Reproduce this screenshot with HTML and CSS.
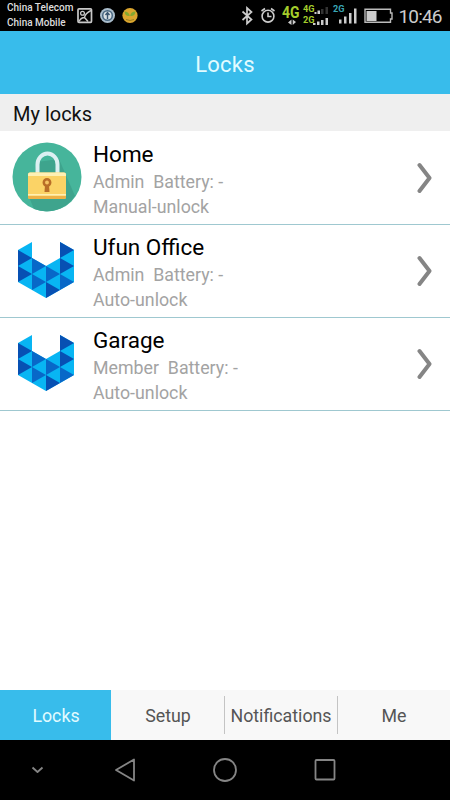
FILE: index.html
```html
<!DOCTYPE html>
<html lang="en">
<head>
<meta charset="utf-8">
<title>Locks</title>
<link rel="stylesheet" href="styles.css">
</head>
<body>
<svg class="defs" aria-hidden="true">
  <symbol id="gem" viewBox="0 0 56 58">
    <path fill="#08b5f3" d="M0 9 14 1V17L28 25 42 17V1L56 9V41L28 57 0 41Z"/>
    <path fill="#0750b3" d="M0 9 14 17 0 25ZM42 1 56 9 42 17ZM0 25 14 33 0 41ZM42 17 56 25 42 33Z"/>
    <path fill="#0868c8" d="M14 17 28 25 14 33ZM14 33 28 41 14 49ZM28 25 42 33 28 41ZM42 33 56 41 42 49Z"/>
    <path fill="#0750b3" d="M28 41 42 49 28 57Z"/>
  </symbol>
  <symbol id="chevron" viewBox="0 0 16 34">
    <path d="M2.500 4 12.500 17 2.500 30" fill="none" stroke="#858585" stroke-width="4" stroke-linecap="round" stroke-linejoin="round"/>
  </symbol>
</svg>
<div class="screen">
  <div class="status">
    <div class="carriers"><span>China Telecom</span><span>China Mobile</span></div>
    <svg class="status-icons" viewBox="76 0 374 31" width="374" height="31">
      <g fill="none" stroke="#c8c8c8" stroke-width="1.700">
        <rect x="78" y="8.800" width="13.500" height="13.500" rx="1"/>
        <circle cx="82.500" cy="13.300" r="1.900" stroke-width="1.300"/>
        <path d="M79 21.500Q81 17.500 84.500 17.500 85 13.500 91 10.500M84.500 17.500 88 21.500" stroke-width="1.400"/>
      </g>
      <circle cx="107.500" cy="15.500" r="7.500" fill="#a9bccb"/>
      <circle cx="107.500" cy="15.500" r="4.800" fill="#d8e0e5" stroke="#476680" stroke-width="1.500"/>
      <path d="M107.500 19V13M105.500 15 107.500 12.500 109.500 15" stroke="#385570" stroke-width="1.400" fill="none"/>
      <circle cx="130" cy="15.500" r="7.600" fill="#dca62e"/>
      <path d="M129.800 16Q125 16.500 124.500 11.500 129 11.500 129.800 16ZM130.200 16Q130.500 11.500 135.500 11.500 135 16.500 130.200 16Z" fill="#83a832"/>
      <path d="M126 19.500Q130 21.500 134 19.500" stroke="#9a8020" fill="none"/>
      <path d="M242.500 11.500 251.500 19.500 247 23.500V8L251.500 12 242.500 20" fill="none" stroke="#ccc" stroke-width="1.700"/>
      <g fill="none" stroke="#ccc" stroke-width="1.600">
        <circle cx="268" cy="16.200" r="5.900"/>
        <path d="M268 12.500V16.500H271.500M261.500 11 265 8.500M271 8.500 274.500 11"/>
      </g>
      <g fill="#a4cd2c" font-family="Roboto, sans-serif" font-weight="700">
        <text x="282" y="17.500" font-size="16" textLength="17.500" lengthAdjust="spacingAndGlyphs">4G</text>
        <text x="303" y="11.500" font-size="9.500" textLength="11.500" lengthAdjust="spacingAndGlyphs">4G</text>
        <text x="303" y="22.500" font-size="9.500" textLength="11.500" lengthAdjust="spacingAndGlyphs">2G</text>
        <text x="333" y="11.500" font-size="9.500" fill="#3aa6b5" textLength="11.500" lengthAdjust="spacingAndGlyphs">2G</text>
      </g>
      <path d="M291.500 19.500V25L288 22.500ZM292.700 19.500V25L296 22Z" fill="#ccc"/>
      <g fill="#ccc">
        <path d="M314.500 12h2v2h-2ZM317.500 10.500h2.500v3.500h-2.500ZM313 23h2.500v2h-2.500ZM317 21.500h2.500v3.500h-2.500ZM321 20h2.500v5h-2.500ZM325.500 18h2.500v7h-2.500Z"/>
        <path d="M321 9h2.500v5h-2.500ZM325.500 7h2.500v7h-2.500Z" fill="#333"/>
        <path d="M339 19.500h2.500v4h-2.500ZM344 16.500h2.500v7h-2.500ZM349 13h2.500v10.500h-2.500ZM354 8.500h2.500v15h-2.500Z"/>
        <rect x="366.500" y="11" width="10" height="10"/>
      </g>
      <path d="M365 9.300H390.500V13H392V19H390.500V22.300H365Z" fill="none" stroke="#bbb" stroke-width="1.400"/>
      <text x="398.500" y="22.500" font-family="Roboto, sans-serif" font-size="19" fill="#ccc" textLength="44">10:46</text>
    </svg>
  </div>
  <header class="title">Locks</header>
  <h2 class="section">My locks</h2>
  <ul class="locks">
    <li class="lock first">
      <svg class="avatar" viewBox="0 0 70 70">
        <circle cx="35" cy="35" r="34.500" fill="#46b59b"/>
        <path d="M47 17 63 54A34.500 34.500 0 0 1 22 67L17 55 25 20Z" fill="#3ea48d"/>
        <path d="M25.500 32V22.500A10 11 0 0 1 45.500 22.500V32" fill="none" stroke="#dcf0f2" stroke-width="4"/>
        <rect x="16" y="30.500" width="38" height="26.500" rx="2" fill="#fbd366"/>
        <path d="M16 34V32.500Q16 30.500 18 30.500H52Q54 30.500 54 32.500V34ZM16 52H54V53.500H16Z" fill="#fff0b4"/>
        <path d="M16 54H54V55.500Q54 57 52 57H18Q16 57 16 55.500Z" fill="#eeb247"/>
        <path d="M33 43 32.500 50H37.500L37 43" fill="#b96e27"/>
        <circle cx="35" cy="40.500" r="3.200" fill="#f5c463" stroke="#b96e27" stroke-width="2.500"/>
      </svg>
      <div class="info"><h3>Home</h3><p>Admin&nbsp; Battery: -</p><p>Manual-unlock</p></div>
      <svg class="chevron"><use href="#chevron"/></svg>
    </li>
    <li class="lock">
      <svg class="avatar gem"><use href="#gem"/></svg>
      <div class="info"><h3>Ufun Office</h3><p>Admin&nbsp; Battery: -</p><p>Auto-unlock</p></div>
      <svg class="chevron"><use href="#chevron"/></svg>
    </li>
    <li class="lock">
      <svg class="avatar gem"><use href="#gem"/></svg>
      <div class="info"><h3>Garage</h3><p>Member&nbsp; Battery: -</p><p>Auto-unlock</p></div>
      <svg class="chevron"><use href="#chevron"/></svg>
    </li>
  </ul>
  <nav class="tabs">
    <a class="tab active">Locks</a>
    <a class="tab">Setup</a>
    <a class="tab divided">Notifications</a>
    <a class="tab divided">Me</a>
  </nav>
  <div class="system-nav">
    <svg width="450" height="60" viewBox="0 0 450 60" fill="none" stroke="#858585" stroke-width="1.800" stroke-linejoin="round">
      <path d="M32.500 27.500 37.500 32 42.500 27.500"/>
      <path d="M134 19.500V40.500L116 30Z"/>
      <circle cx="225" cy="30" r="11"/>
      <rect x="315.500" y="20" width="19" height="19.500" rx="1"/>
    </svg>
  </div>
</div>
</body>
</html>
```
FILE: styles.css
```css
* { box-sizing: border-box; margin: 0; padding: 0; }
body { font-family: Roboto, sans-serif; background: #fff; }
.defs { display: none; }
.screen { width: 450px; height: 800px; display: flex; flex-direction: column; overflow: hidden; }
.status { height: 31px; background: #000; display: flex; flex: none; }
.carriers { width: 76px; padding: 1px 0 0 7px; color: #ddd; font-size: 10px; font-weight: 500; line-height: 14.500px; white-space: nowrap; }
.carriers span { display: block; }
.title { height: 63px; flex: none; background: #38bceb; color: #e2fbff; font-size: 22px; line-height: 67px; letter-spacing: 0.200px; text-align: center; }
.section { height: 37px; flex: none; background: #efefef; padding-left: 13px; font-size: 20px; font-weight: 400; line-height: 40px; color: #111; }
.locks { flex: 1; list-style: none; }
.lock { height: 93px; display: flex; align-items: flex-start; border-bottom: 1px solid #9fc8d0; padding: 0 17px 0 12px; }
.lock.first { height: 94px; padding-top: 1px; }
.avatar { width: 70px; height: 70px; margin-top: 10px; flex: none; }
.avatar.gem { width: 56px; height: 58px; margin: 16px 8px 0 6px; }
.info { flex: 1; padding: 9px 0 0 11px; }
.info h3 { font-size: 22.500px; font-weight: 400; line-height: 27px; margin-bottom: 2px; color: #000; }
.info p { font-size: 17.800px; line-height: 24.500px; color: #a3a3a3; }
.chevron { width: 16px; height: 34px; margin-top: 29px; flex: none; }
.tabs { height: 50px; flex: none; display: grid; grid-template-columns: 111px 113px 113px 113px; background: #f8f8f8; }
.tab { position: relative; height: 50px; padding: 0 0 0 1px; font-size: 17.800px; line-height: 52px; text-align: center; color: #555; overflow: hidden; }
.tab.active { background: #38bceb; color: #e2fbff; }
.tab.divided::before { content: ""; position: absolute; left: 0; top: 6px; width: 1px; height: 38px; background: #c4c4c4; }
.system-nav { height: 60px; flex: none; background: #000; }
```
